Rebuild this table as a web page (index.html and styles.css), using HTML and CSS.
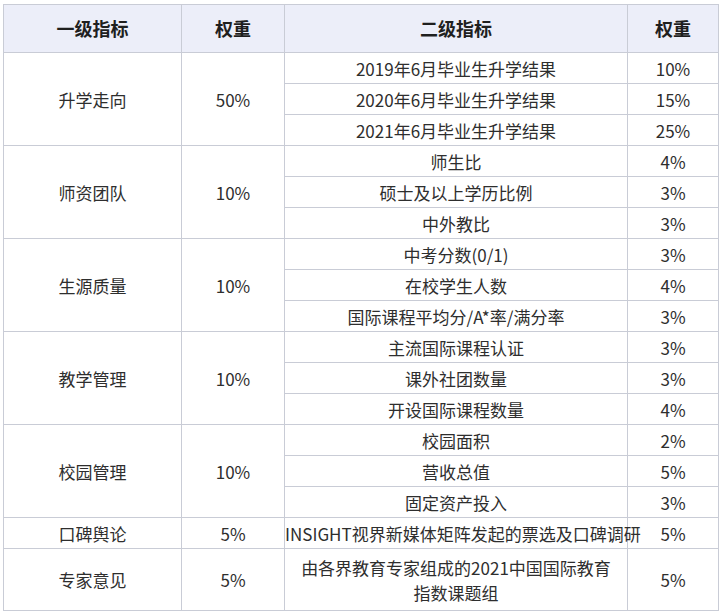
FILE: index.html
```html
<!DOCTYPE html>
<html lang="zh-CN">
<head>
<meta charset="utf-8">
<title>指标权重</title>
<link rel="stylesheet" href="styles.css">
</head>
<body>
<table class="tbl">
  <colgroup>
    <col class="c1"><col class="c2"><col class="c3"><col class="c4">
  </colgroup>
  <thead>
    <tr class="head">
      <th>一级指标</th><th>权重</th><th>二级指标</th><th>权重</th>
    </tr>
  </thead>
  <tbody>
    <tr><td rowspan="3">升学走向</td><td rowspan="3">50%</td><td>2019年6月毕业生升学结果</td><td>10%</td></tr>
    <tr><td>2020年6月毕业生升学结果</td><td>15%</td></tr>
    <tr><td>2021年6月毕业生升学结果</td><td>25%</td></tr>

    <tr><td rowspan="3">师资团队</td><td rowspan="3">10%</td><td>师生比</td><td>4%</td></tr>
    <tr><td>硕士及以上学历比例</td><td>3%</td></tr>
    <tr><td>中外教比</td><td>3%</td></tr>

    <tr><td rowspan="3">生源质量</td><td rowspan="3">10%</td><td>中考分数(0/1)</td><td>3%</td></tr>
    <tr><td>在校学生人数</td><td>4%</td></tr>
    <tr><td>国际课程平均分/A*率/满分率</td><td>3%</td></tr>

    <tr><td rowspan="3">教学管理</td><td rowspan="3">10%</td><td>主流国际课程认证</td><td>3%</td></tr>
    <tr><td>课外社团数量</td><td>3%</td></tr>
    <tr><td>开设国际课程数量</td><td>4%</td></tr>

    <tr><td rowspan="3">校园管理</td><td rowspan="3">10%</td><td>校园面积</td><td>2%</td></tr>
    <tr><td>营收总值</td><td>5%</td></tr>
    <tr><td>固定资产投入</td><td>3%</td></tr>

    <tr><td>口碑舆论</td><td>5%</td><td>INSIGHT视界新媒体矩阵发起的票选及口碑调研</td><td>5%</td></tr>
    <tr class="tall"><td>专家意见</td><td>5%</td><td class="multi">由各界教育专家组成的2021中国国际教育<br>指数课题组</td><td>5%</td></tr>
  </tbody>
</table>
</body>
</html>
```

FILE: styles.css
```css
html, body {
  margin: 0;
  padding: 0;
  background: #ffffff;
}
body {
  padding: 4px 0 0 3px;
  font-family: "Noto Sans CJK SC", "Noto Sans", sans-serif;
  color: #2e2e2e;
}
.tbl {
  border-collapse: collapse;
  table-layout: fixed;
  width: 715px;
}
.c1 { width: 178px; }
.c2 { width: 103px; }
.c3 { width: 343px; }
.c4 { width: 91px; }
.tbl th, .tbl td {
  border: 1px solid #c9ccd6;
  padding: 0;
  text-align: center;
  vertical-align: middle;
  font-size: 17px;
  line-height: 21px;
  white-space: nowrap;
}
.tbl td {
  height: 30px;
}
.head th {
  height: 47px;
  background: #eceef9;
  color: #1f1f1f;
  font-weight: 700;
  font-size: 18px;
}
.tall td {
  height: 61px;
}
.tbl td.multi {
  line-height: 25px;
}
```
